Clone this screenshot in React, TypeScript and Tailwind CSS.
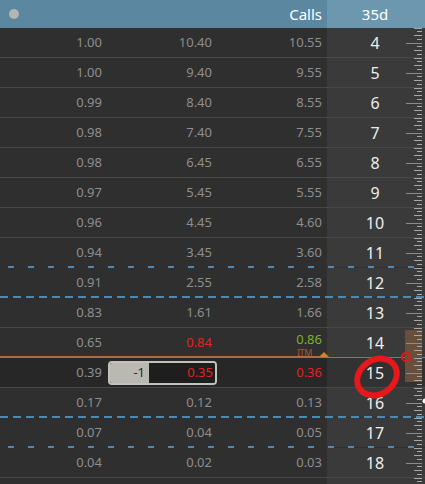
import React from "react";

type Row = {
  strike: number | "";
  a: string;
  b: string;
  c: string;
  bRed?: boolean;
  cGreen?: boolean;
  cRed?: boolean;
  line?: "solid" | "sparse" | "dense" | "orange";
  active?: boolean;
};

const rows: Row[] = [
  { strike: 4, a: "1.00", b: "10.40", c: "10.55" },
  { strike: 5, a: "1.00", b: "9.40", c: "9.55" },
  { strike: 6, a: "0.99", b: "8.40", c: "8.55" },
  { strike: 7, a: "0.98", b: "7.40", c: "7.55" },
  { strike: 8, a: "0.98", b: "6.45", c: "6.55" },
  { strike: 9, a: "0.97", b: "5.45", c: "5.55" },
  { strike: 10, a: "0.96", b: "4.45", c: "4.60" },
  { strike: 11, a: "0.94", b: "3.45", c: "3.60", line: "sparse" },
  { strike: 12, a: "0.91", b: "2.55", c: "2.58", line: "dense" },
  { strike: 13, a: "0.83", b: "1.61", c: "1.66" },
  { strike: 14, a: "0.65", b: "0.84", c: "0.86", bRed: true, cGreen: true, line: "orange" },
  { strike: 15, a: "0.39", b: "0.35", c: "0.36", cRed: true, active: true },
  { strike: 16, a: "0.17", b: "0.12", c: "0.13", line: "dense" },
  { strike: 17, a: "0.07", b: "0.04", c: "0.05", line: "sparse" },
  { strike: 18, a: "0.04", b: "0.02", c: "0.03" },
  { strike: "", a: "", b: "", c: "" },
];

function Separator({ kind }: { kind?: Row["line"] }) {
  if (kind === "sparse" || kind === "dense")
    return (
      <svg className="-mt-px block" width="425" height="2">
        <line
          x1={kind === "sparse" ? 8 : 0}
          y1="1"
          x2="425"
          y2="1"
          stroke="#4f88b0"
          strokeWidth="2"
          strokeDasharray={kind === "sparse" ? "6 14" : "8 5"}
        />
      </svg>
    );
  if (kind === "orange") return <div className="h-[2px] -mt-px bg-[#b5683a]" />;
  return <div className="h-px bg-[#474747]" />;
}

function Ruler() {
  const ticks: React.ReactNode[] = [];
  for (let i = 0; i < 16; i++) {
    const center = i * 30 + 14.5;
    for (let j = -4; j < 4; j++) {
      const y = Math.round(center + j * 3.75);
      const len = j === 0 ? 16 : j === 2 || j === -2 || j === -4 ? 8 : 5;
      ticks.push(
        <rect key={`${i}-${j}`} x={17 - len} y={y} width={len} height={1} fill={j === 0 ? "#8c8c8c" : "#a8a8a8"} />
      );
    }
  }
  return (
    <svg className="absolute right-[3px] top-[28px]" width="17" height="456" viewBox="0 0 17 456">
      <rect x="0" y="302" width="17" height="52" fill="#6a4e3c" />
      {ticks}
    </svg>
  );
}

export default function App() {
  return (
    <div
      className="relative w-[425px] h-[484px] overflow-hidden bg-[#2f2f2f] text-[13px]"
      style={{ fontFamily: '"Noto Sans", "Open Sans", sans-serif' }}
    >
      {/* header */}
      <div className="flex h-[28px] bg-[#5c87a0] text-[15px] text-white">
        <div className="flex items-center pl-[9px] w-[218px]">
          <span className="h-[10px] w-[10px] rounded-full bg-[#b6b6b0]" />
        </div>
        <div className="flex w-[109px] items-center justify-end pr-[5px]">Calls</div>
        <div className="flex flex-1 items-center justify-center bg-[#6c97ae] pr-[2px]">35d</div>
      </div>

      {rows.map((r, i) => (
        <div key={i}>
          <div className={`flex h-[29px] ${r.active ? "bg-[#272727]" : "bg-[#2f2f2f]"} text-[#8e8e8e]`}>
            <div className="flex w-[108px] items-center justify-end pr-[6px]">{r.a}</div>
            {r.active ? (
              <div className="flex w-[110px] items-center">
                <div className="flex h-[24px] w-[109px] overflow-hidden rounded-[4px] border-2 border-[#c2c2bc]">
                  <div className="flex w-[39px] items-center justify-end bg-[#b9b9b1] pr-[4px] text-[#2a2a2a]">-1</div>
                  <div className="flex flex-1 items-center justify-end bg-[#1e1e1e] pr-[2px] text-[#e3231f]">{r.b}</div>
                </div>
              </div>
            ) : (
              <div className={`flex w-[110px] items-center justify-end pr-[6px] ${r.bRed ? "text-[#e3231f]" : ""}`}>{r.b}</div>
            )}
            <div className="relative flex w-[109px] items-center justify-end pr-[5px]">
              <span className={`${r.cGreen ? "-mt-[8px] leading-[16px] text-[#78b52c]" : ""} ${r.cRed ? "text-[#e3231f]" : ""}`}>{r.c}</span>
              {r.cGreen && (
                <div className="absolute bottom-0 left-[79px] flex items-end gap-[7px]">
                  <span className="text-[9px] leading-[9px] tracking-tighter text-[#a05a34]">ITM</span>
                  <span className="h-0 w-0 border-x-[5px] border-b-[5px] border-x-transparent border-b-[#e07a3a]" />
                </div>
              )}
            </div>
            <div
              className={`flex flex-1 items-center justify-center pr-[2px] text-[16px] text-[#eeeeee] ${
                r.active ? "bg-[#323232]" : "bg-[#3a3a3a]"
              }`}
            >
              {r.strike}
            </div>
          </div>
          <Separator kind={r.line} />
        </div>
      ))}

      <Ruler />

      {/* annotation */}
      <svg className="pointer-events-none absolute left-0 top-0" width="425" height="484">
        <ellipse cx="377" cy="377" rx="21" ry="17" transform="rotate(-35 377 377)" fill="none" stroke="#e5191c" strokeWidth="6" />
        <circle cx="406" cy="357" r="4" fill="none" stroke="#e5191c" strokeWidth="2" />
        <circle cx="425" cy="401" r="2.5" fill="#f2f2f2" />
      </svg>
    </div>
  );
}
